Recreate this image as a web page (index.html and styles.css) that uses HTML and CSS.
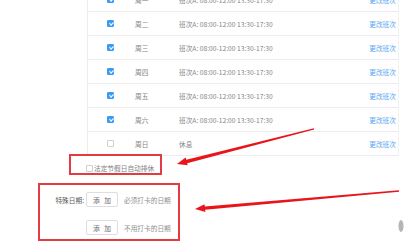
FILE: index.html
```html
<!DOCTYPE html>
<html lang="zh-CN">
<head>
<meta charset="utf-8">
<link rel="stylesheet" href="styles.css">
</head>
<body>
<div class="page">
  <div class="schedule">
    <div class="row"><span class="cb checked"></span><span class="day">周一</span><span class="shift">班次A: 08:00-12:00 13:30-17:30</span><a class="link">更改班次</a></div>
    <div class="row"><span class="cb checked"></span><span class="day">周二</span><span class="shift">班次A: 08:00-12:00 13:30-17:30</span><a class="link">更改班次</a></div>
    <div class="row"><span class="cb checked"></span><span class="day">周三</span><span class="shift">班次A: 08:00-12:00 13:30-17:30</span><a class="link">更改班次</a></div>
    <div class="row"><span class="cb checked"></span><span class="day">周四</span><span class="shift">班次A: 08:00-12:00 13:30-17:30</span><a class="link">更改班次</a></div>
    <div class="row"><span class="cb checked"></span><span class="day">周五</span><span class="shift">班次A: 08:00-12:00 13:30-17:30</span><a class="link">更改班次</a></div>
    <div class="row"><span class="cb checked"></span><span class="day">周六</span><span class="shift">班次A: 08:00-12:00 13:30-17:30</span><a class="link">更改班次</a></div>
    <div class="row"><span class="cb"></span><span class="day">周日</span><span class="shift">休息</span><a class="link">更改班次</a></div>
  </div>

  <label class="holiday"><span class="cb"></span><span>法定节假日自动排休</span></label>

  <div class="special">
    <span class="special-label">特殊日期:</span>
    <button class="btn">添 加</button>
    <span class="hint">必须打卡的日期</span>
    <span></span>
    <button class="btn">添 加</button>
    <span class="hint">不用打卡的日期</span>
  </div>

  <div class="mark mark-holiday"></div>
  <div class="mark mark-special"></div>

  <svg class="arrows" width="413" height="242" viewBox="0 0 413 242">
    <polygon fill="#e8161c" points="313.9,128.3 186.3,159.8 185.6,157.6 177,164 187.8,165.3 187.1,163.2 314.1,129.5"/>
    <polygon fill="#e8161c" points="398.9,190.2 204.8,206.4 204.5,204.3 195,209 205.4,211.9 205.1,209.8 399.1,191.7"/>
    <ellipse cx="401" cy="226" rx="2.5" ry="6" fill="#b5b5b5"/>
  </svg>
</div>
</body>
</html>
```

FILE: styles.css
```css
* { box-sizing: border-box; }

html, body {
  margin: 0;
  padding: 0;
  background: #ffffff;
}

body {
  font-family: "Noto Sans CJK SC", "Noto Sans", sans-serif;
  font-size: 6.7px;
  color: #777;
  width: 413px;
  height: 242px;
  overflow: hidden;
}

.page {
  position: relative;
  display: flow-root;
  width: 413px;
  height: 242px;
  overflow: hidden;
}

.schedule {
  margin-left: 87px;
  margin-top: -12px;
  width: 312px;
  border-left: 1px solid #ececec;
  border-right: 1px solid #f3f3f3;
}

.row {
  display: grid;
  grid-template-columns: 47px 44px 1fr auto;
  align-items: center;
  height: 24px;
  border-bottom: 1px solid #ececec;
}

.row .cb {
  margin-left: 19px;
}

.cb {
  display: inline-block;
  width: 7px;
  height: 7px;
  border: 1px solid #cfcfcf;
  border-radius: 1px;
  background: #fff;
  position: relative;
}

.cb.checked {
  background: #3a9cf2;
  border-color: #3a9cf2;
}

.cb.checked::after {
  content: "";
  position: absolute;
  left: 1.6px;
  top: 0.4px;
  width: 1.6px;
  height: 3.2px;
  border-right: 1px solid #fff;
  border-bottom: 1px solid #fff;
  transform: rotate(45deg);
}

.day, .shift {
  color: #858585;
  line-height: 8px;
}

.link {
  color: #5aa6f2;
  padding-right: 2px;
  line-height: 8px;
}

.holiday {
  display: flex;
  align-items: center;
  gap: 1px;
  margin-left: 86px;
  margin-top: 9px;
  height: 7px;
  line-height: 7px;
  color: #808080;
}

.special {
  display: grid;
  grid-template-columns: 84px 32px auto;
  column-gap: 2px;
  row-gap: 13px;
  align-items: center;
  margin-top: 20px;
}

.special-label {
  text-align: right;
  color: #5a5a5a;
}

.btn {
  height: 15px;
  width: 32px;
  padding: 0 0 0 1.5px;
  border: 1px solid #dedede;
  border-radius: 2px;
  background: #fff;
  font-family: inherit;
  font-size: 6.7px;
  letter-spacing: 1.5px;
  color: #666;
}

.hint {
  margin-left: 4px;
  color: #8f8f8f;
}

.mark {
  position: absolute;
  border: 2px solid #e43a42;
}

.mark-holiday {
  left: 69px;
  top: 154px;
  width: 93px;
  height: 21px;
}

.mark-special {
  left: 38px;
  top: 183px;
  width: 142px;
  height: 58px;
}

.arrows {
  position: absolute;
  left: 0;
  top: 0;
  pointer-events: none;
}
```
